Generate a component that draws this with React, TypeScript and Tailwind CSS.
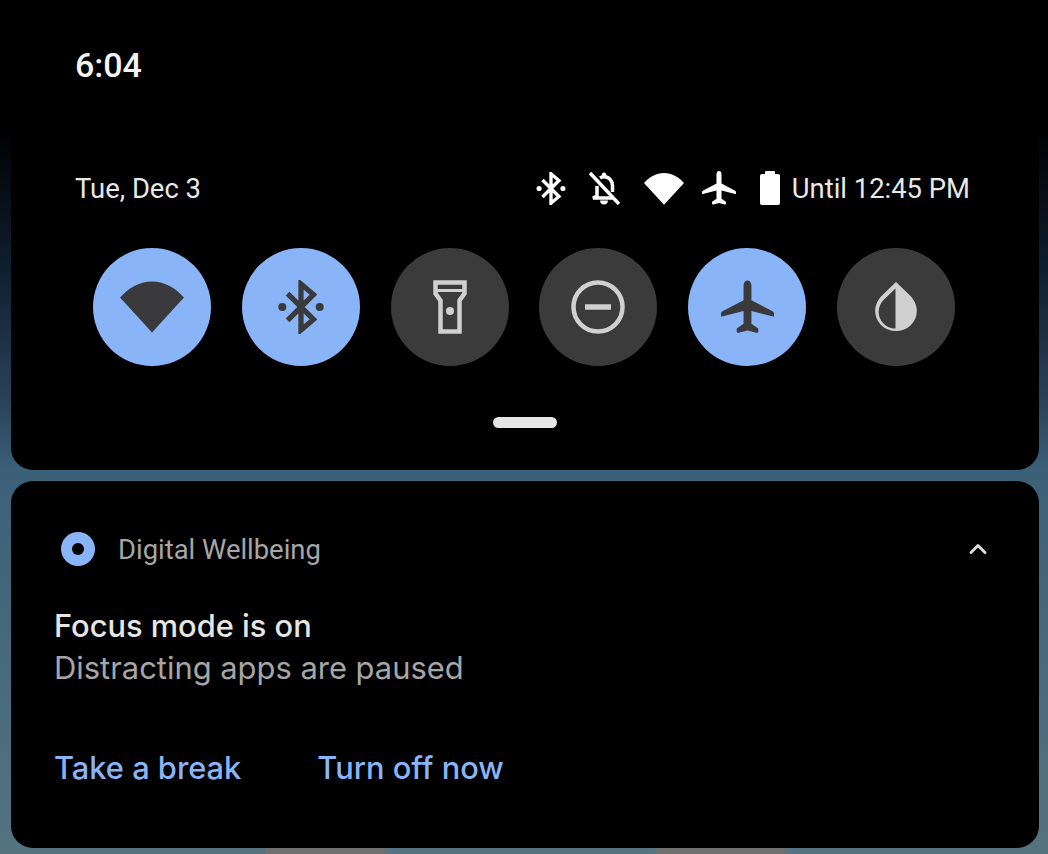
import { ChevronUp } from "lucide-react"

const BLUE = "bg-[#8ab4f8]"

function WifiGlyph({ className }: { className: string }) {
  return (
    <svg viewBox="0 0 64 52" className={className} fill="currentColor">
      <path d="M0 17C9 7 20 1 32 1s23 6 32 16L32 52 0 17z" />
    </svg>
  )
}

function BluetoothGlyph({ className }: { className: string }) {
  return (
    <svg viewBox="0 0 48 54" className={className} fill="none" stroke="currentColor">
      <path d="M10 13l27 27-13 11V3l13 11-27 27" strokeWidth="5.500" />
      <circle cx="4.500" cy="27" r="4.200" fill="currentColor" stroke="none" />
      <circle cx="43.500" cy="27" r="4.200" fill="currentColor" stroke="none" />
    </svg>
  )
}

function PlaneGlyph({ className }: { className: string }) {
  return (
    <svg viewBox="0 0 54 54" className={className} fill="currentColor">
      <path d="M23 5c0-3 2-5 4-5s4 2 4 5v15l21 11c1.500.8 2 1.600 2 2.600V37l-23-6v13l7 5v3c0 1-1 1.500-2 1.200L27 51l-9 2.200c-1 .3-2-.2-2-1.200v-3l7-5V31L0 37v-3.400c0-1 .5-1.800 2-2.600l21-11V5z" />
    </svg>
  )
}

function MutedBell({ className }: { className: string }) {
  return (
    <svg viewBox="0 0 34 34" className={className} fill="none" stroke="currentColor" strokeWidth="3.500">
      <path d="M3 2l29 31" />
      <path d="M10 15v10l-4 2h20" />
      <path d="M13 7c1.300-.9 2.500-1.300 4-1.300 5 0 8.500 4 8.500 9.300v6" />
      <path d="M13 29.500c0 2.500 2 4 4 4s4-1.500 4-4z" fill="currentColor" stroke="none" />
      <path d="M14.500 5c0-2 1-3.500 2.500-3.500s2.500 1.500 2.500 3.500z" fill="currentColor" stroke="none" />
    </svg>
  )
}

function Flashlight({ className }: { className: string }) {
  return (
    <svg viewBox="0 0 34 54" className={className} fill="none" stroke="currentColor" strokeWidth="4.500">
      <path d="M2.500 2.500h29v11l-5 7v31h-19v-31l-5-7v-11z" />
      <path d="M3 10.500h28" strokeWidth="3" />
      <circle cx="17" cy="31" r="4" fill="currentColor" stroke="none" />
    </svg>
  )
}

function DndGlyph({ className }: { className: string }) {
  return (
    <svg viewBox="0 0 54 54" className={className} fill="none" stroke="currentColor">
      <circle cx="27" cy="27" r="24.500" strokeWidth="4.500" />
      <path d="M14 27h26" strokeWidth="5.500" />
    </svg>
  )
}

function InvertGlyph({ className }: { className: string }) {
  return (
    <svg viewBox="0 0 44 52" className={className}>
      <path d="M22 1l13.500 13c9.500 9 9.500 22 1.500 30-8 8-22 8-30 0-8-8-8-21 1.500-30L22 1z" fill="currentColor" />
      <path d="M21.500 7.500v40c-5 0-9-1.500-12-5-6.500-6.500-6.500-17 .5-24l11.500-11z" fill="#3b3b3b" />
    </svg>
  )
}

function Tile({ active, children }: { active?: boolean; children: React.ReactNode }) {
  return (
    <div
      className={`w-[118px] h-[118px] rounded-full flex items-center justify-center ${
        active ? `${BLUE} text-[#3a3a3c]` : "bg-[#3b3b3b] text-[#d0d0d0]"
      }`}
    >
      {children}
    </div>
  )
}

export default function App() {
  return (
    <div className="w-[1048px] h-[854px] overflow-hidden bg-[linear-gradient(to_bottom,#000_15%,#0f1e2d_31%,#2a4258_47%,#3b6078_55%,#55737f_100%)] font-['Roboto',sans-serif] relative">
      {/* Wallpaper peeking out under the notification */}
      <div className="absolute left-[265px] top-[848px] w-[120px] h-[6px] bg-[#6f6f6f]" />
      <div className="absolute left-[655px] top-[848px] w-[130px] h-[6px] bg-[#6f6f6f]" />

      <div className="relative pl-[11px] pr-[9px]">
        {/* Quick settings */}
        <div className="h-[470px] bg-black rounded-b-[22px] flex flex-col">
          <div className="pt-[47px] pl-[64px] text-[34px] leading-[36px] font-medium text-[#f4f4f4]">6:04</div>

          <div className="mt-[87px] pl-[64px] pr-[69px] flex items-center justify-between h-[36px]">
            <span className="text-[27.4px] leading-[36px] pt-[1px] text-[#e8e8e8]">Tue, Dec 3</span>
            <div className="flex items-center text-white">
              <BluetoothGlyph className="w-[30px] h-[33px]" />
              <MutedBell className="w-[34px] h-[34px] ml-[21px]" />
              <WifiGlyph className="w-[40px] h-[33px] ml-[23px]" />
              <PlaneGlyph className="w-[34px] h-[34px] ml-[18px]" />
              <div className="ml-[24px] w-[20px] h-[34px] flex flex-col items-center">
                <div className="w-[10px] h-[3px] bg-white rounded-t-[1px]" />
                <div className="w-[20px] h-[31px] bg-white rounded-[2px]" />
              </div>
              <span className="ml-[12px] text-[27.4px] leading-[36px] pt-[1px] text-[#e8e8e8] whitespace-nowrap">Until 12:45 PM</span>
            </div>
          </div>

          <div className="mt-[42px] pl-[82px] flex gap-[30.8px]">
            <Tile active><WifiGlyph className="w-[64px] h-[53px] mt-[-2px]" /></Tile>
            <Tile active><BluetoothGlyph className="w-[46px] h-[54px]" /></Tile>
            <Tile><Flashlight className="w-[34px] h-[54px]" /></Tile>
            <Tile><DndGlyph className="w-[54px] h-[54px]" /></Tile>
            <Tile active><PlaneGlyph className="w-[53px] h-[54px]" /></Tile>
            <Tile><InvertGlyph className="w-[44px] h-[52px]" /></Tile>
          </div>

          <div className="mt-[51px] self-center w-[64px] h-[11px] rounded-full bg-[#e6e6e6]" />
        </div>

        {/* Notification */}
        <div className="mt-[11px] h-[367px] bg-black rounded-[22px] pl-[43px] pr-[47px]">
          <div className="pt-[50px] flex items-center justify-between h-[86px]">
            <div className="flex items-center">
              <div className={`w-[34px] h-[34px] ml-[7px] rounded-full ${BLUE} flex items-center justify-center`}>
                <div className="w-[12px] h-[12px] rounded-full bg-black" />
              </div>
              <span className="ml-[23px] text-[27.4px] leading-[36px] pt-[1px] text-[#a6a6a6]">Digital Wellbeing</span>
            </div>
            <ChevronUp className="w-[28px] h-[28px] text-[#dcdcdc]" strokeWidth={2.5} />
          </div>
          <div className="font-['Inter',sans-serif]">
            <div className="mt-[40px] text-[30.8px] leading-[38px] font-medium text-[#e6e6e6]">Focus mode is on</div>
            <div className="mt-[4px] text-[30.9px] leading-[38px] text-[#a6a6a6]">Distracting apps are paused</div>
            <div className="mt-[62px] flex gap-[76px] text-[30.8px] leading-[38px] font-medium text-[#8ab4f8]">
              <span>Take a break</span>
              <span>Turn off now</span>
            </div>
          </div>
        </div>
      </div>
    </div>
  )
}
